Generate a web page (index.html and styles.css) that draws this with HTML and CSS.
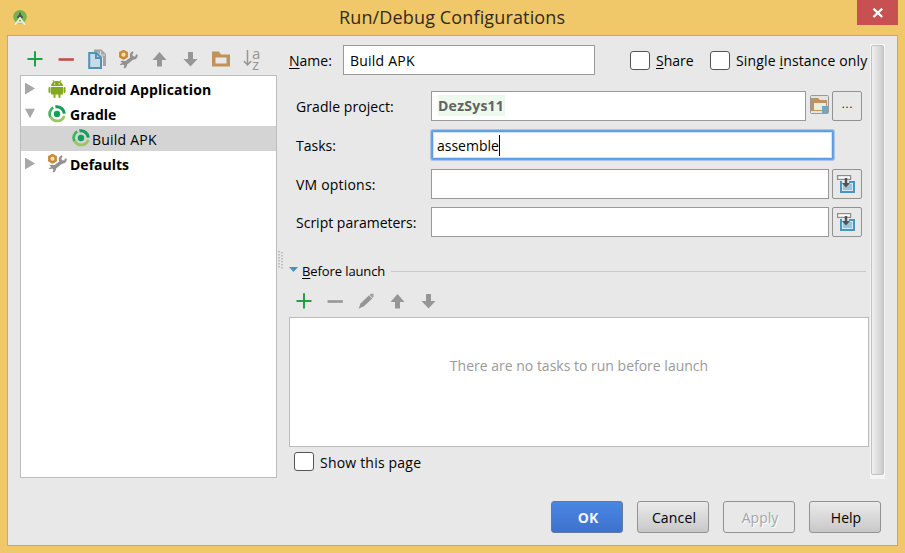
FILE: index.html
```html
<!DOCTYPE html>
<html lang="en">
<head>
<meta charset="utf-8">
<title>Run/Debug Configurations</title>
<link rel="stylesheet" href="styles.css">
</head>
<body>
<svg class="defs" width="0" height="0">
  <symbol id="plus" viewBox="0 0 20 20"><path d="M2.5 10H17.5M10 2.2V17.6" stroke="#22a046" stroke-width="2" fill="none"/></symbol>
  <symbol id="minus" viewBox="0 0 20 20"><path d="M2.6 10.5H17.9" stroke="currentColor" stroke-width="2.6" fill="none"/></symbol>
  <symbol id="up" viewBox="0 0 20 20"><path d="M10.5 3L17.5 11H13V17.5H8V11H3.5Z" fill="#969696"/></symbol>
  <symbol id="down" viewBox="0 0 20 20"><path d="M10.5 17.5L17.5 10H13V3H8V10H3.5Z" fill="#969696"/></symbol>
  <symbol id="wrench" viewBox="0 0 20 20">
    <path d="M6.8 15L14.5 8.8" stroke="#929292" stroke-width="3.6"/>
    <path d="M14.8 2.2C12.3 3 11.2 5.3 12 8L14.3 10.6C17 11.3 20 9.4 19.7 5.6L17.9 5.5L17.2 7.4L15 7.2L14.3 5.2L15.6 3.8Z" fill="#929292"/>
    <path d="M2.3 12.3C4.4 11.4 7 11.7 8.3 13.2C9.7 15 9.2 17.7 7 19.4L5.5 18.6L6.5 16.8L5.1 15.4L3 16.3L1.6 15.3L4.3 13.9Z" fill="#929292"/>
    <circle cx="5.5" cy="5.7" r="3.3" fill="#f5deb0" stroke="#c98a36" stroke-width="2.4"/>
    <path d="M5.5 1V3M5.5 8.6V10.6M1.2 3.3L3 4.4M8 7L9.8 8.1M1.2 8.1L3 7M8 4.4L9.8 3.3" stroke="#c98a36" stroke-width="1.8"/>
  </symbol>
  <symbol id="gradle" viewBox="0 0 18 18">
    <path d="M5.2 2.5A7.3 7.3 0 0 0 2.6 12.4" stroke="#43b35c" stroke-width="2.7" fill="none"/>
    <path d="M2.9 12.2A7.3 7.3 0 0 0 16.2 10.8" stroke="#9bc467" stroke-width="2.8" fill="none"/>
    <path d="M7.4 1.8A7.5 7.5 0 0 1 16.3 8.6" stroke="#149d5b" stroke-width="3" fill="none"/>
    <circle cx="9" cy="9" r="3.2" fill="#149d5b"/>
  </symbol>
  <symbol id="insert" viewBox="0 0 20 20">
    <rect x="4" y="8" width="13" height="10" fill="#d9e7ef" stroke="#4795c1" stroke-width="2"/>
    <path d="M6 10H15V16H6Z" fill="#9fc3d6"/><path d="M5 7H12V9H5Z" fill="#e8e8e8"/>
    <rect x=".6" y="1.6" width="13" height="3.8" fill="#fafafa" stroke="#8c8c8c" stroke-width="1.2"/>
    <path d="M7.8 4H10.2V9H13L9 13.5L5 9H7.8Z" fill="#525252"/>
  </symbol>
</svg>
<header class="titlebar">
  <svg class="app-icon" viewBox="0 0 16 16"><circle cx="7" cy="6.8" r="6.8" fill="#75b34e"/><path d="M4 7A3.2 3.6 0 0 1 10 7V8H4Z" fill="#56565a"/><path d="M7 4V8L2 14.8M7 8L12 14.8M3.8 11.3Q7 13 10.4 11.3" stroke="#eef1e4" stroke-width="1.5" fill="none"/><path d="M6 2.8H8V7H6Z" fill="#56565a"/></svg>
  <h1>Run/Debug Configurations</h1>
  <button class="close"><svg viewBox="0 0 12 10"><path d="M1.5 .7L10.2 9M10.2 .7L1.5 9" stroke="#fff" stroke-width="2.3"/></svg></button>
</header>
<main class="dialog">
  <div class="content">
    <section class="sidebar">
      <div class="toolbar">
        <svg><use href="#plus"/></svg>
        <svg class="red"><use href="#minus"/></svg>
        <svg viewBox="0 0 20 20"><path d="M7 .5H14.5L19 5V17H16V8L10.5 3H7Z" fill="#a3a3a3"/><path d="M13.5 2V6H18" stroke="#dcdcdc" stroke-width="1.2" fill="none"/><path d="M2.2 4H9.5L14 8.5V19H2.2Z" fill="#c6dce8" stroke="#5391b7" stroke-width="2"/><path d="M9 4V9H14" fill="none" stroke="#5391b7" stroke-width="2"/></svg>
        <svg><use href="#wrench"/></svg>
        <svg><use href="#up"/></svg>
        <svg><use href="#down"/></svg>
        <svg viewBox="0 0 20 20"><path d="M1 2.5H8L10 5.5H19V17.5H1ZM4.5 8.5V14.5H15.5V8.5Z" fill="#c0935a" fill-rule="evenodd"/></svg>
        <div class="sort"><svg viewBox="0 0 9 20"><path d="M4.5 1V16M.8 12L4.5 15.8L8.2 12" stroke="#969696" stroke-width="1.5" fill="none"/></svg><div><span>a</span><span>z</span></div></div>
      </div>
      <ul class="tree">
        <li><i class="arrow"></i><svg viewBox="0 0 18 18"><path d="M3 6A6 5 0 0 1 15 6ZM3 7H15V14.5H3Z" fill="#82a81c"/><path d="M1.5 8V12M16.5 8V12M6.5 13V17M11.5 13V17" stroke="#82a81c" stroke-width="2" stroke-linecap="round"/><path d="M5 0L6.5 3M13 0L11.5 3" stroke="#82a81c"/><circle cx="6.7" cy="3.9" r=".7" fill="#fff"/><circle cx="11.3" cy="3.9" r=".7" fill="#fff"/></svg><b class="t-android">Android Application</b></li>
        <li><i class="arrow open"></i><svg><use href="#gradle"/></svg><b>Gradle</b></li>
        <li class="selected"><svg><use href="#gradle"/></svg><span class="t-build">Build APK</span></li>
        <li><i class="arrow"></i><svg class="wide"><use href="#wrench"/></svg><b>Defaults</b></li>
      </ul>
    </section>
    <div class="splitter"><svg viewBox="0 0 5 18"><path d="M1 0V18M4 1V18" stroke="#b5b5b5" stroke-width="1.5" stroke-dasharray="1.5 1.5"/></svg></div>
    <section class="editor">
      <div class="name-row">
        <label><u>N</u>ame:</label>
        <div class="field name"><span class="t-build">Build APK</span></div>
        <i class="check share"></i><span class="t-share"><u>S</u>hare</span>
        <i class="check"></i><span class="t-single">Single <u>i</u>nstance only</span>
      </div>
      <div class="form">
        <div class="row"><label class="t-project">Gradle project:</label><div class="field project"><b class="chip">DezSys11</b></div><svg class="folder" viewBox="0 0 19 19"><rect x=".5" y=".5" width="18" height="18" rx="1" fill="#e3e3e3" stroke="#999"/><path d="M1 3H8L10 5H17V16H1Z" fill="#c0935a"/><path d="M4 8H16V15H4Z" fill="#f0eae2"/><path d="M12 11H18V18H12Z" fill="#6ca7cc"/></svg><button class="side"><span class="dots">...</span></button></div>
        <div class="row"><label>Tasks:</label><div class="field focused"><span>assemble</span><i class="caret"></i></div></div>
        <div class="row"><label class="t-vm">VM options:</label><div class="field"></div><button class="side"><svg><use href="#insert"/></svg></button></div>
        <div class="row"><label>Script parameters:</label><div class="field"></div><button class="side"><svg><use href="#insert"/></svg></button></div>
      </div>
      <div class="section-title"><i></i><span class="t-before"><u>B</u>efore launch</span><hr></div>
      <div class="toolbar steps">
        <svg><use href="#plus"/></svg>
        <svg class="grey"><use href="#minus"/></svg>
        <svg viewBox="0 0 20 20"><path d="M2.5 17.7L4.5 12.5L12.8 4.5L16.2 7.5L8 15.3Z" fill="#969696"/><path d="M13.3 4L15 2.7H17.5V5.3L16.6 7Z" fill="#a0a0a0"/></svg>
        <svg><use href="#up"/></svg>
        <svg><use href="#down"/></svg>
      </div>
      <div class="steps-list"><span>There are no tasks to run before launch</span></div>
      <div class="show-row"><i class="check"></i><span class="t-show">Show this page</span></div>
    </section>
    <div class="scroll"><div class="thumb"></div></div>
  </div>
  <footer>
    <button class="primary"><span>OK</span></button>
    <button><span class="t-cancel">Cancel</span></button>
    <button class="disabled"><span>Apply</span></button>
    <button><span>Help</span></button>
  </footer>
</main>
</body>
</html>
```
FILE: styles.css
```css
* { box-sizing: border-box; }
body { margin: 0; width: 905px; height: 553px; overflow: hidden; background: #f0c869; color: #000; font: 14px/20px "Open Sans", "Noto Sans", sans-serif; white-space: nowrap; }
.defs { display: none; }
button { padding: 0; font: inherit; color: inherit; }
svg { display: block; flex: none; }
u { text-underline-offset: 2px; text-decoration-thickness: 1px; }
.titlebar { height: 35px; display: flex; align-items: flex-start; padding-left: 13px; }
.app-icon { width: 16px; height: 16px; margin-top: 10px; }
h1 { margin: 5px 0 0 310px; width: 518px; font-size: 18px; line-height: 25px; font-weight: 400; color: #302b20; letter-spacing: .14px; }
.close { width: 41px; height: 25px; border: 0; background: #c75050; display: grid; place-items: center; }
.close svg { width: 12px; height: 10px; }
.dialog { width: 891px; height: 511px; margin-left: 7px; border: 1px solid #cda95d; background: #e8e8e8; }
.content { display: flex; height: 442px; padding-left: 12px; }
.sidebar { width: 257px; padding-top: 13px; }
.toolbar { display: flex; gap: 11px; height: 26px; padding-left: 5px; }
.toolbar svg { width: 20px; height: 20px; }
.red { color: #c04f49; }
.grey { color: #969696; }
.sort { display: flex; width: 20px; height: 20px; padding-left: 1px; color: #969696; font: 15px/10px "Open Sans", sans-serif; }
.toolbar .sort svg { width: 9px; }
.sort span { display: block; height: 10px; margin-top: -1px; }
.sort span + span { margin-top: 1px; }
.tree { list-style: none; margin: 0; padding: 0; width: 257px; height: 403px; border: 1px solid #bcbcbc; background: #fff; }
.tree li { display: flex; align-items: center; height: 25px; padding-left: 4px; }
.tree .selected { background: #d4d4d4; padding-left: 51px; }
.arrow { width: 10px; height: 12px; margin-right: 13px; background: #a7a7a7; clip-path: polygon(0 0, 100% 50%, 0 100%); }
.arrow.open { clip-path: polygon(0 10%, 100% 10%, 50% 90%); }
.tree svg { width: 18px; height: 18px; margin-right: 4px; }
.tree svg.wide { width: 20px; height: 20px; margin: -2px 3px 0 -1px; }
.tree .selected svg { margin: -2px 2px 0 0; }
.tree b, .tree span { padding-top: 2px; }
.t-android { letter-spacing: .1px; }
.t-build { letter-spacing: .22px; }
.t-single { letter-spacing: .15px; }
.t-project { letter-spacing: .07px; }
.t-vm, .t-show { letter-spacing: .2px; }
.t-before { letter-spacing: -.1px; }
.t-cancel { letter-spacing: .15px; }
.splitter { width: 12px; padding: 215px 0 0 1px; }
.splitter svg { width: 5px; height: 18px; }
.editor { width: 580px; padding-top: 9px; }
.name-row { display: flex; align-items: center; height: 30px; }
.name-row label { width: 54px; }
.name-row label, .name-row span, .row label, .field > span { padding-top: 2px; }
.field { height: 30px; border: 1px solid #999; background: #fff; flex: none; width: 398px; display: flex; align-items: center; padding-left: 6px; }
.field.name { width: 252px; }
.check { width: 20px; height: 19px; border: 1px solid #555; border-radius: 3px; background: #fff; flex: none; margin-right: 6px; }
.share { margin-left: 35px; }
.name-row .t-share { width: 54px; }
.form { padding: 16px 0 0 7px; display: grid; grid-template-rows: 39px 39px 38px 30px; }
.row { display: flex; height: 30px; align-items: center; }
.row label { width: 135px; }
.field.project { width: 375px; }
.chip { background: #edf9ed; color: #626262; height: 21px; line-height: 22px; width: 67px; margin-top: -1px; letter-spacing: .25px; }
.folder { width: 19px; height: 19px; margin: -4px 3px 0 4px; }
.side { width: 30px; height: 30px; border: 1px solid #929292; border-radius: 2px; background: #e8e8e8; display: grid; place-items: center; margin-left: 3px; }
.dots { font-size: 11px; line-height: 12px; letter-spacing: 1px; margin: -5px -1px 0 0; }
.folder + .side { margin-left: 0; }
.side svg { width: 20px; height: 20px; }
.focused { width: 401px; height: 28px; margin: 0 0 0 1px; border: 1px solid #5e9be2; border-radius: 1px; padding-left: 4px; box-shadow: 0 0 0 1px #6ca2e0, 0 0 0 2px #a9c5e9, inset 0 0 0 1px #d1e3f8; }
.caret { width: 1px; height: 21px; background: #000; }
.section-title { height: 20px; margin-top: 24px; display: flex; align-items: center; font-size: 13px; }
.section-title i { width: 9px; height: 5px; background: #4394c4; clip-path: polygon(0 0, 100% 0, 50% 100%); margin: -3px 4px 0 0; }
.section-title hr { border: 0; height: 1px; background: #c8c8c8; width: 475px; margin: 0 3px 0 auto; }
.steps { height: 36px; padding-top: 10px; }
.steps-list { height: 130px; border: 1px solid #bcbcbc; background: #fff; color: #9a9a9a; display: flex; justify-content: center; padding-top: 38px; }
.show-row { display: flex; align-items: center; height: 20px; margin-top: 4px; padding-left: 5px; }
.show-row span { padding-top: 3px; }
.scroll { width: 15px; height: 435px; margin: 8px 0 0 1px; background: #f5f5f5; padding: 1px; }
.thumb { width: 13px; height: 430px; border: 1px solid #c2c2c2; border-radius: 2px; background: linear-gradient(90deg, #f0f0f0, #cbcbcb); }
footer { display: flex; gap: 14px; padding: 23px 0 0 543px; }
footer button { width: 72px; height: 32px; border: 1px solid #929292; border-radius: 3px; background: linear-gradient(#eaeaea, #c8c8c8); padding: 1px 0 0 2px; }
footer .primary { background: linear-gradient(#4a86e4, #3d72cb); border-color: #687894; color: #f5f5f5; font-weight: 700; }
footer .disabled { background: #e8e8e8; color: #a5a5a5; text-shadow: 1px 1px #fff; }
```
